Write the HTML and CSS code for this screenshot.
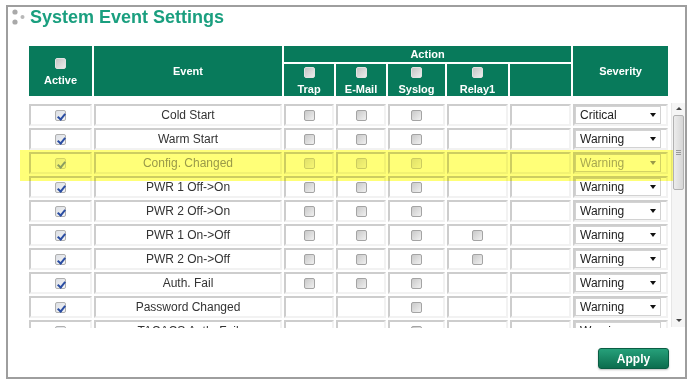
FILE: index.html
```html
<!DOCTYPE html>
<html lang="en">
<head>
    <meta charset="UTF-8">
    <title>System Event Settings</title>
    <link rel="stylesheet" href="styles.css">
</head>
<body>
    <div class="panel">
        <h1 class="title">
            <svg width="14" height="18" viewBox="0 0 14 18">
                <circle cx="3" cy="4" r="2.6" fill="#a9a9a9"/>
                <circle cx="3" cy="14" r="2.6" fill="#a9a9a9"/>
                <circle cx="10.5" cy="9" r="2" fill="#b8b8b8"/>
            </svg>
            System Event Settings
        </h1>

        <table class="grid head">
            <colgroup>
                <col class="c-active"><col class="c-event"><col class="c-trap"><col class="c-mail">
                <col class="c-syslog"><col class="c-relay"><col class="c-blank"><col class="c-sev">
            </colgroup>
            <tr class="top">
                <th rowspan="2" class="with-cb"><div class="hcell"><span class="cb"></span><span>Active</span></div></th>
                <th rowspan="2">Event</th>
                <th colspan="5">Action</th>
                <th rowspan="2">Severity</th>
            </tr>
            <tr class="sub">
                <th class="with-cb"><div class="hcell"><span class="cb"></span><span>Trap</span></div></th>
                <th class="with-cb"><div class="hcell"><span class="cb"></span><span>E-Mail</span></div></th>
                <th class="with-cb"><div class="hcell"><span class="cb"></span><span>Syslog</span></div></th>
                <th class="with-cb"><div class="hcell"><span class="cb"></span><span>Relay1</span></div></th>
                <th></th>
            </tr>
        </table>

        <div class="body-wrap">
            <div class="scroll-area">
                <table class="grid rows">
                    <colgroup>
                        <col class="c-active"><col class="c-event"><col class="c-trap"><col class="c-mail">
                        <col class="c-syslog"><col class="c-relay"><col class="c-blank"><col class="c-sev">
                    </colgroup>
                    <tr>
                        <td><span class="cb on"></span></td>
                        <td>Cold Start</td>
                        <td><span class="cb"></span></td>
                        <td><span class="cb"></span></td>
                        <td><span class="cb"></span></td>
                        <td></td><td></td>
                        <td class="sev"><span class="sel">Critical</span></td>
                    </tr>
                    <tr>
                        <td><span class="cb on"></span></td>
                        <td>Warm Start</td>
                        <td><span class="cb"></span></td>
                        <td><span class="cb"></span></td>
                        <td><span class="cb"></span></td>
                        <td></td><td></td>
                        <td class="sev"><span class="sel">Warning</span></td>
                    </tr>
                    <tr class="off">
                        <td><span class="cb on"></span></td>
                        <td>Config. Changed</td>
                        <td><span class="cb"></span></td>
                        <td><span class="cb"></span></td>
                        <td><span class="cb"></span></td>
                        <td></td><td></td>
                        <td class="sev"><span class="sel">Warning</span></td>
                    </tr>
                    <tr>
                        <td><span class="cb on"></span></td>
                        <td>PWR 1 Off-&gt;On</td>
                        <td><span class="cb"></span></td>
                        <td><span class="cb"></span></td>
                        <td><span class="cb"></span></td>
                        <td></td><td></td>
                        <td class="sev"><span class="sel">Warning</span></td>
                    </tr>
                    <tr>
                        <td><span class="cb on"></span></td>
                        <td>PWR 2 Off-&gt;On</td>
                        <td><span class="cb"></span></td>
                        <td><span class="cb"></span></td>
                        <td><span class="cb"></span></td>
                        <td></td><td></td>
                        <td class="sev"><span class="sel">Warning</span></td>
                    </tr>
                    <tr>
                        <td><span class="cb on"></span></td>
                        <td>PWR 1 On-&gt;Off</td>
                        <td><span class="cb"></span></td>
                        <td><span class="cb"></span></td>
                        <td><span class="cb"></span></td>
                        <td><span class="cb"></span></td>
                        <td></td>
                        <td class="sev"><span class="sel">Warning</span></td>
                    </tr>
                    <tr>
                        <td><span class="cb on"></span></td>
                        <td>PWR 2 On-&gt;Off</td>
                        <td><span class="cb"></span></td>
                        <td><span class="cb"></span></td>
                        <td><span class="cb"></span></td>
                        <td><span class="cb"></span></td>
                        <td></td>
                        <td class="sev"><span class="sel">Warning</span></td>
                    </tr>
                    <tr>
                        <td><span class="cb on"></span></td>
                        <td>Auth. Fail</td>
                        <td><span class="cb"></span></td>
                        <td><span class="cb"></span></td>
                        <td><span class="cb"></span></td>
                        <td></td><td></td>
                        <td class="sev"><span class="sel">Warning</span></td>
                    </tr>
                    <tr>
                        <td><span class="cb on"></span></td>
                        <td>Password Changed</td>
                        <td></td>
                        <td></td>
                        <td><span class="cb"></span></td>
                        <td></td><td></td>
                        <td class="sev"><span class="sel">Warning</span></td>
                    </tr>
                    <tr>
                        <td><span class="cb on"></span></td>
                        <td>TACACS Auth. Fail</td>
                        <td></td>
                        <td></td>
                        <td><span class="cb"></span></td>
                        <td></td><td></td>
                        <td class="sev"><span class="sel">Warning</span></td>
                    </tr>
                </table>
            </div>
            <div class="scrollbar">
                <div class="sb-up"></div>
                <div class="sb-thumb"><span class="grip"></span></div>
                <div class="sb-space"></div>
                <div class="sb-down"></div>
            </div>
        </div>

        <div class="footer">
            <button class="apply">Apply</button>
        </div>

        <div class="highlight"></div>
    </div>
</body>
</html>
```

FILE: styles.css
```css
* {
    margin: 0;
    padding: 0;
    box-sizing: border-box;
}

body {
    font-family: "Liberation Sans", Arial, sans-serif;
    background: #fff;
    color: #333;
}

.panel {
    position: relative;
    width: 681px;
    height: 374px;
    margin: 5px 0 0 6px;
    border: 2px solid #9e9e9e;
}

.title {
    display: flex;
    align-items: center;
    gap: 4px;
    height: 20px;
    padding-left: 4px;
    font-size: 18px;
    line-height: 20px;
    font-weight: bold;
    color: #1a9f7f;
}

.title svg {
    display: block;
}

/* shared table grid */
.grid {
    width: 643px;
    table-layout: fixed;
    border-collapse: separate;
    border-spacing: 2px;
}

.c-active { width: 63px; }
.c-event { width: 188px; }
.c-trap { width: 50px; }
.c-mail { width: 50px; }
.c-syslog { width: 57px; }
.c-relay { width: 61px; }
.c-blank { width: 61px; }
.c-sev { width: 95px; }

/* header */
.head {
    margin: 17px 0 0 19px;
}

.head tr.top { height: 16px; }
.head tr.sub { height: 32px; }

.head th {
    background: #087a5b;
    color: #fff;
    font-size: 11px;
    line-height: 13px;
    font-weight: bold;
    text-align: center;
    vertical-align: middle;
    padding: 0;
}

.head th.with-cb {
    padding-top: 3px;
}

.hcell {
    display: flex;
    flex-direction: column;
    align-items: center;
    gap: 5px;
}

.head .cb {
    background: linear-gradient(135deg, #c4c4c4, #ececec);
    border-color: #e2e2e2;
}

/* checkbox */
.cb {
    position: relative;
    display: inline-block;
    width: 11px;
    height: 11px;
    vertical-align: middle;
    border: 1px solid #a4a4a4;
    border-radius: 2px;
    background: linear-gradient(135deg, #c9c9c9, #f0f0f0);
}

.cb.on {
    border-color: #b0b0b0;
    background: linear-gradient(135deg, #dcdfe4, #f4f5f7);
}

.cb.on::after {
    content: "";
    position: absolute;
    left: 3px;
    top: 1px;
    width: 3px;
    height: 6px;
    border: solid #2b4ea3;
    border-width: 0 2px 2px 0;
    transform: rotate(40deg);
}

/* body rows */
.body-wrap {
    display: flex;
    height: 226px;
    margin: 4px 0 0 19px;
}

.scroll-area {
    width: 643px;
    height: 226px;
    overflow: hidden;
}

.rows td {
    height: 22px;
    padding: 0;
    border: 2px solid;
    border-color: #cdcdcd #f2f2f2 #f2f2f2 #cdcdcd;
    text-align: center;
    vertical-align: middle;
    font-size: 12px;
    line-height: 14px;
    color: #333;
}

.rows td.sev {
    text-align: left;
}

.sel {
    display: flex;
    align-items: center;
    justify-content: space-between;
    width: 86px;
    height: 18px;
    padding: 0 4px;
    border: 1px solid #d2d2d2;
    background: #fff;
    color: #222;
    font-size: 12px;
}

.sel::after {
    content: "";
    border-left: 3.5px solid transparent;
    border-right: 3.5px solid transparent;
    border-top: 4px solid #111;
}

/* disabled row */
.rows tr.off td { color: #9a9a9a; }
.rows tr.off .cb { opacity: 0.55; }
.rows tr.off .sel { color: #a8a8a8; }
.rows tr.off .sel::after { border-top-color: #999; }

/* scrollbar */
.scrollbar {
    display: flex;
    flex-direction: column;
    align-items: center;
    width: 14px;
    height: 224px;
    margin: 1px 0 0 1px;
    background: #f5f5f5;
    border-left: 1px solid #e6e6e6;
}

.sb-up,
.sb-down {
    display: flex;
    align-items: center;
    justify-content: center;
    width: 100%;
}

.sb-up {
    height: 8px;
    margin-top: 1px;
}

.sb-down {
    height: 14px;
}

.sb-up::before {
    content: "";
    border-left: 3px solid transparent;
    border-right: 3px solid transparent;
    border-bottom: 3px solid #444;
}

.sb-down::before {
    content: "";
    border-left: 3px solid transparent;
    border-right: 3px solid transparent;
    border-top: 3px solid #444;
}

.sb-thumb {
    display: flex;
    align-items: center;
    justify-content: center;
    width: 11px;
    height: 75px;
    margin-top: 3px;
    border: 1px solid #b2b2b2;
    border-radius: 2px;
    background: linear-gradient(to right, #ececec, #d6d6d6);
}

.grip {
    display: block;
    width: 5px;
    height: 5px;
    border-top: 1px solid #9a9a9a;
    border-bottom: 1px solid #9a9a9a;
    background: linear-gradient(#9a9a9a, #9a9a9a) center / 100% 1px no-repeat;
}

.sb-space {
    flex: 1;
}

/* footer */
.footer {
    display: flex;
    justify-content: flex-end;
    margin-top: 20px;
    padding-right: 16px;
}

.apply {
    width: 71px;
    height: 21px;
    border: 1px solid #0a5d43;
    border-radius: 3px;
    background: linear-gradient(#26a07a, #0c6d4e);
    color: #fff;
    font-family: "Liberation Sans", Arial, sans-serif;
    font-size: 12px;
    font-weight: bold;
    box-shadow: 0 1px 2px rgba(0, 0, 0, 0.25);
    cursor: pointer;
}

/* marker over the Config. Changed row */
.highlight {
    position: absolute;
    left: 12px;
    top: 143px;
    width: 653px;
    height: 31px;
    background: #ffff78;
    mix-blend-mode: multiply;
    pointer-events: none;
}
```
